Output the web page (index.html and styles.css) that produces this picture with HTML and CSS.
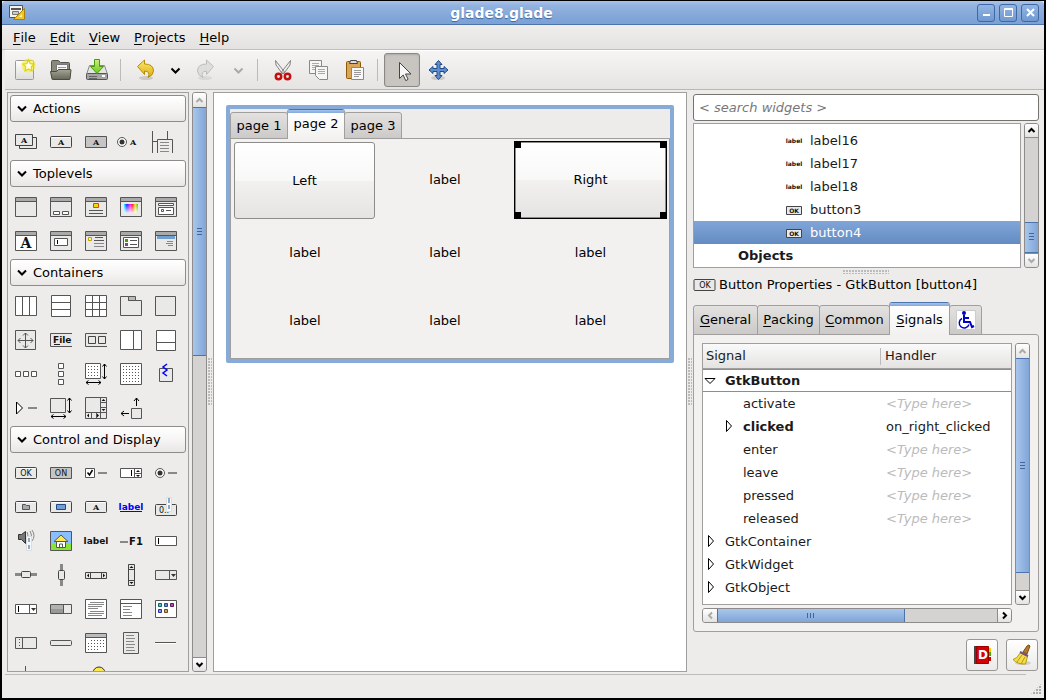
FILE: index.html
```html
<!DOCTYPE html>
<html lang="en">
<head>
<meta charset="utf-8">
<title>glade8.glade</title>
<link rel="stylesheet" href="styles.css">
</head>
<body>
<svg class="defs" aria-hidden="true">
  <linearGradient id="g-doc" x1="0" y1="0" x2="0" y2="1"><stop offset="0" stop-color="#fff"/><stop offset="1" stop-color="#dcdcda"/></linearGradient>
  <linearGradient id="g-folder" x1="0" y1="0" x2="0" y2="1"><stop offset="0" stop-color="#a5a595"/><stop offset="1" stop-color="#66665a"/></linearGradient>
  <linearGradient id="g-gold" x1="0" y1="0" x2="0" y2="1"><stop offset="0" stop-color="#fbe870"/><stop offset="1" stop-color="#dcae0a"/></linearGradient>
  <linearGradient id="g-green" x1="0" y1="0" x2="0" y2="1"><stop offset="0" stop-color="#c8f07a"/><stop offset="1" stop-color="#6cc71c"/></linearGradient>
  <linearGradient id="g-rainbow"><stop offset="0" stop-color="#0ff"/><stop offset=".2" stop-color="#00f"/><stop offset=".45" stop-color="#f0f"/><stop offset=".6" stop-color="#f00"/><stop offset=".8" stop-color="#fd0"/><stop offset="1" stop-color="#0c0"/></linearGradient>
  <linearGradient id="g-fade" x1="0" y1="0" x2="0" y2="1"><stop offset="0" stop-color="#fff" stop-opacity=".1"/><stop offset="1" stop-color="#fff" stop-opacity=".9"/></linearGradient>
  <symbol id="win" viewBox="0 0 24 24"><path class="o" d="M1.5 2.5h21v19h-21z"/><path fill="#aaa" d="M2 3h20v3H2z"/><path class="l" d="M2 6.5h20"/></symbol>
  <symbol id="btn" viewBox="0 0 24 24"><rect class="b" x="1.5" y="6.5" width="21" height="11" rx="1"/><path stroke="#fff" d="M3 7.500h18"/></symbol>
  <symbol id="up" viewBox="0 0 9 9"><path class="c" d="M1.500 6l3-3 3 3"/></symbol>
  <symbol id="down" viewBox="0 0 9 9"><path class="c" d="M1.500 3l3 3 3-3"/></symbol>
  <symbol id="left" viewBox="0 0 9 9"><path class="c" d="M6 1.500l-3 3 3 3"/></symbol>
  <symbol id="right" viewBox="0 0 9 9"><path class="c" d="M3 1.500l3 3-3 3"/></symbol>
  <symbol id="closed" viewBox="0 0 10 14"><path fill="#fff" stroke="#000" d="M2.500 1.500v11l5-5.500z"/></symbol>
</svg>

<div class="window">
  <header class="titlebar">
    <svg class="app-icon" width="18" height="18" viewBox="0 0 18 18"><path fill="#f4f4ef" stroke="#555" d="M1.500 1.500h13v12h-13z"/><path stroke="#555" stroke-width="2" d="M3 5h10"/><path stroke="#777" fill="#ccc" d="M4.500 7.500h6v3h-6z"/><path fill="#eec62b" stroke="#a8820a" d="M16.500 4.500v11h-11z"/><path fill="#fff3b0" d="M14 10v3h-3z"/></svg>
    <h1>glade8.glade</h1>
    <div class="controls">
      <button aria-label="Minimize"><svg width="9" height="9"><path stroke="#fff" stroke-width="2" d="M1 7h7"/></svg></button>
      <button aria-label="Maximize"><svg width="9" height="9"><path fill="none" stroke="#fff" d="M.5.500h8v8h-8zM1 1.500h7"/></svg></button>
      <button aria-label="Close"><svg width="9" height="9"><path stroke="#fff" stroke-width="2" d="M1 1l7 7M8 1L1 8"/></svg></button>
    </div>
  </header>

  <nav class="menubar">
    <button><u>F</u>ile</button><button><u>E</u>dit</button><button><u>V</u>iew</button><button><u>P</u>rojects</button><button><u>H</u>elp</button>
  </nav>

  <div class="toolbar" role="toolbar">
    <button aria-label="New"><svg width="24" height="24"><rect x="2.500" y="2.500" width="18" height="19" rx="1" fill="url(#g-doc)" stroke="#999"/><circle cx="15.500" cy="7.500" r="7" fill="#f3ea1e" opacity=".55"/><path fill="#fff" stroke="#e4d500" stroke-width="1.200" d="M15.500 2l1.700 3.600 3.800.5-2.800 2.700.7 4-3.400-1.900-3.400 1.900.7-4L10 6.100l3.800-.5z"/></svg></button>
    <button aria-label="Open"><svg width="24" height="24"><path fill="#8a8a7c" stroke="#55554b" d="M2.500 18V3.500q0-1 1-1h6l2 2h8q1 0 1 1V18z"/><path fill="#f6f6f6" stroke="#777" d="M7.500 6.500h11v10h-11z"/><path stroke="#999" d="M9 9.500h8M9 11.500h8M9 13.500h5"/><path fill="url(#g-folder)" stroke="#4a4a40" d="M1.500 13.500h6l2-2h12q.5 0 .5.500l-1 9q0 .5-.5.500h-17q-.5 0-.5-.5z"/></svg></button>
    <button aria-label="Save"><svg width="24" height="24"><path fill="#e4e4e2" stroke="#888" d="M4.500 7.500h15l3 9h-21z"/><rect x="1.500" y="15.500" width="21" height="6" rx="1" fill="#a4a5a2" stroke="#555"/><path stroke="#666" d="M4 18.500h8M4 20.500h8"/><path fill="#fff" d="M17 17h3v2h-3z"/><path fill="url(#g-green)" stroke="#4a9a10" d="M9.500 1.500h5v7h4L12 15.500 5.500 8.500h4z"/></svg></button>
    <span class="sep"></span>
    <button aria-label="Undo"><svg width="24" height="24"><ellipse cx="13" cy="20" rx="7" ry="2" fill="#0002"/><path fill="url(#g-gold)" stroke="#b98c08" stroke-linejoin="round" d="M4.500 8.500l7-6.500v4q9 0 9 7 0 4-5.500 6.500 3-6-3.500-6.500v3.500z"/></svg></button>
    <button class="narrow" aria-label="Undo history"><svg width="11" height="9"><path class="c" d="M1.500 2.500l4 4 4-4"/></svg></button>
    <button disabled aria-label="Redo"><svg width="24" height="24"><ellipse cx="11" cy="20" rx="7" ry="2" fill="#0001"/><path fill="#dededc" stroke="#bcbcba" stroke-linejoin="round" d="M19.500 8.500l-7-6.500v4q-9 0-9 7 0 4 5.500 6.500-3-6 3.500-6.500v3.500z"/></svg></button>
    <button class="narrow wide" disabled aria-label="Redo history"><svg width="11" height="9"><path class="c" d="M1.500 2.500l4 4 4-4"/></svg></button>
    <span class="sep"></span>
    <button aria-label="Cut"><svg width="24" height="24"><path fill="#eee" stroke="#777" stroke-width=".9" d="M5.500 2.500L6 7l6.500 9 2-2zM20.500 2.500L20 7l-6.500 9-2-2z"/><g fill="none" stroke="#c41010" stroke-width="2.500"><circle cx="8.500" cy="18.500" r="2.700"/><circle cx="17.500" cy="18.500" r="2.700"/></g></svg></button>
    <button aria-label="Copy"><svg width="24" height="24"><g fill="#f6f6f5" stroke="#888"><path d="M3.500 2.500h12v13h-12z"/><path stroke="#aaa" d="M6 5.500h7M6 7.500h7M6 9.500h7M6 11.500h4"/><path d="M9.500 8.500h12v13h-8l-4-4z"/><path stroke="#aaa" d="M12 11.500h7M12 13.500h7M12 15.500h7"/></g></svg></button>
    <button aria-label="Paste"><svg width="24" height="24"><rect x="4.500" y="3.500" width="14" height="17" rx="1" fill="#d9a65c" stroke="#8f5902"/><path fill="#ddd" stroke="#444" d="M7.500 5.500l1-3h6l1 3z"/><path fill="#f8f8f8" stroke="#888" d="M9.500 9.500h12v12h-12z"/><path stroke="#999" d="M12 12.500h7M12 14.500h7M12 16.500h7M12 18.500h5"/></svg></button>
    <span class="sep"></span>
    <button class="pressed" aria-label="Selector" aria-pressed="true"><svg width="24" height="24"><path fill="#f7f7f7" stroke="#444" d="M9.500 4.500v16l3.700-3.500 2.500 5.500q2 0 2.300-1.500l-2.500-5h5.500z"/></svg></button>
    <button aria-label="Drag resize"><svg width="24" height="24"><ellipse cx="12" cy="20" rx="7" ry="2" fill="#0002"/><path fill="#5c8fd0" stroke="#204a87" stroke-linejoin="round" d="M12.500 2.500l3.500 4h-2v4h4v-2l4 3.500-4 3.500v-2h-4v4h2l-3.500 4-3.500-4h2v-4h-4v2L3 12l4-3.500v2h4v-4H9z"/></svg></button>
  </div>

  <main class="main">
    <section class="palette" aria-label="Palette">
      <h2><button class="head"><svg width="10" height="9"><path class="c" d="M1 2.500l4 4 4-4"/></svg>Actions</button></h2>
      <div class="icons">
        <button aria-label="Action group"><svg width="24" height="24"><path class="b" d="M5.500 7.500h17v11h-17z"/><path class="b" d="M1.500 4.500h17v11h-17z"/><text x="10" y="13" class="serif">A</text></svg></button>
        <button aria-label="Action"><svg width="24" height="24"><use href="#btn"/><text x="12" y="15" class="serif">A</text></svg></button>
        <button aria-label="Toggle action"><svg width="24" height="24"><path fill="#c6c5c4" stroke="#555" d="M1.500 6.500h21v11h-21z"/><text x="12" y="15" class="serif">A</text></svg></button>
        <button aria-label="Radio action"><svg width="24" height="24"><circle class="w" cx="3" cy="12" r="4.500"/><circle cx="3" cy="12" r="2.500" fill="#333"/><text x="14" y="15" class="serif">A</text></svg></button>
        <button aria-label="Recent action"><svg width="24" height="24"><path class="l" d="M-1.500 1v22M13.500 1v8M-1 11.500h4M3.500 23V9.500h15V23"/><path class="g" d="M6 12.500h9M6 15.500h9M6 18.500h9M6 21.500h9"/></svg></button>
      </div>

      <h2><button class="head"><svg width="10" height="9"><path class="c" d="M1 2.500l4 4 4-4"/></svg>Toplevels</button></h2>
      <div class="icons">
        <button aria-label="Window"><svg width="24" height="24"><use href="#win"/></svg></button>
        <button aria-label="Dialog"><svg width="24" height="24"><use href="#win"/><path class="w" d="M4.500 16.500h6v3h-6zM13.500 16.500h6v3h-6z"/></svg></button>
        <button aria-label="Message dialog"><svg width="24" height="24"><use href="#win"/><path fill="#f5d80c" stroke="#d05000" d="M9.500 8.500h5v4h-5z"/><path class="l" d="M5 15.500h14M5 18.500h14"/></svg></button>
        <button aria-label="Color selection dialog"><svg width="24" height="24"><use href="#win"/><path fill="url(#g-rainbow)" d="M5 9h14v9H5z"/><path fill="url(#g-fade)" d="M5 9h14v9H5z"/></svg></button>
        <button aria-label="File chooser dialog"><svg width="24" height="24"><use href="#win"/><path class="w" d="M4.500 8.500h15v2h-15zM4.500 12.500h15v7h-15z"/><path class="l" d="M7.500 14.500h2v2h-2zM12 15.500h5"/></svg></button>
        <button aria-label="Font selection dialog"><svg width="24" height="24"><use href="#win"/><path fill="#fff" d="M2 7h20v14H2z"/><text x="12" y="19" class="serif big">A</text></svg></button>
        <button aria-label="Input dialog"><svg width="24" height="24"><use href="#win"/><path class="w" d="M5.500 9.500h13v7h-13z"/><path stroke="#000" d="M8.500 11v4"/></svg></button>
        <button aria-label="About dialog"><svg width="24" height="24"><use href="#win"/><path fill="#fff3b0" stroke="#c4a000" d="M4.500 8.500h3v3h-3z"/><path class="l" d="M11 8.500h8M10 11.500h10"/><path class="g" d="M10 14.500h10M10 17.500h10"/></svg></button>
        <button aria-label="Assistant"><svg width="24" height="24"><use href="#win"/><path class="w" d="M4.500 8.500h15v10h-15z"/><path class="l" d="M11 11.500h7M11 15.500h7"/><path fill="#4e9a06" d="M6 10h3v3H6z"/><path fill="#75507b" d="M6 14h3v3H6z"/></svg></button>
        <button aria-label="Recent chooser dialog"><svg width="24" height="24"><use href="#win"/><path fill="#729fcf" d="M3 7h18v3H3z"/><path class="g" d="M13 12.500h6M12 14.500h7M14 16.500h5"/></svg></button>
      </div>

      <h2><button class="head"><svg width="10" height="9"><path class="c" d="M1 2.500l4 4 4-4"/></svg>Containers</button></h2>
      <div class="icons">
        <button aria-label="Horizontal box"><svg width="24" height="24"><path class="w" d="M1.500 2.500h21v19h-21zM8.500 3v18M15.500 3v18"/></svg></button>
        <button aria-label="Vertical box"><svg width="24" height="24"><path class="w" d="M2.500 1.500h19v21h-19zM3 8.500h18M3 15.500h18"/></svg></button>
        <button aria-label="Table"><svg width="24" height="24"><path class="w" d="M1.500 1.500h21v21h-21zM2 8.500h20M2 15.500h20M8.500 2v20M15.500 2v20"/></svg></button>
        <button aria-label="Notebook"><svg width="24" height="24"><path class="o" d="M1.500 2.500h8v4h13v15h-21z"/><path fill="#bbb" stroke="#555" d="M9.500 2.500h7v4h-7z"/></svg></button>
        <button aria-label="Frame"><svg width="24" height="24"><path class="o" d="M1.500 2.500h20v19h-20z"/></svg></button>
        <button aria-label="Layout"><svg width="24" height="24"><path class="o" d="M1.500 2.500h20v19h-20zM11.500 5v15M4 12.500h15M9 7.500l2.500-2.500 2.500 2.500M9 17.500l2.500 2.500 2.500-2.500M6.500 10L4 12.500 6.500 15M16.500 10l2.500 2.500-2.500 2.500"/></svg></button>
        <button aria-label="Menu bar"><svg width="24" height="24"><path class="o" d="M23 5.500H1.500v13H23"/><text x="4" y="15" class="file">File</text><path stroke="#222" d="M5 16.500h6"/></svg></button>
        <button aria-label="Toolbar"><svg width="24" height="24"><path class="o" d="M23 5.500H1.500v13H23"/><path class="b" d="M4.500 8.500h7v7h-7zM14.500 8.500h7v7h-7z"/></svg></button>
        <button aria-label="Horizontal panes"><svg width="24" height="24"><path class="w" d="M1.500 2.500h21v19h-21zM14.500 3v18"/></svg></button>
        <button aria-label="Vertical panes"><svg width="24" height="24"><path class="w" d="M2.500 2.500h19v20h-19zM3 14.500h18"/></svg></button>
        <button aria-label="Horizontal button box"><svg width="24" height="24"><path class="w" d="M1.500 9.500h5v5h-5zM9.500 9.500h5v5h-5zM17.500 9.500h5v5h-5z"/></svg></button>
        <button aria-label="Vertical button box"><svg width="24" height="24"><path class="w" d="M9.500 1.500h5v5h-5zM9.500 9.500h5v5h-5zM9.500 17.500h5v5h-5z"/></svg></button>
        <button aria-label="Scrolled layout"><svg width="24" height="24"><path class="w" d="M1.500 1.500h15v15h-15z"/><path class="d" d="M4 4.500h11M4 7.500h11M4 10.500h11M4 13.500h11"/><path class="k" d="M20.500 2v15M18.500 4.500l2-2.500 2 2.500M18.500 14.500l2 2.500 2-2.500M2 20.500h15M4.500 18.500L2 20.500l2.500 2M14.500 18.500l2.500 2-2.500 2"/></svg></button>
        <button aria-label="Fixed"><svg width="24" height="24"><path class="w" d="M1.500 1.500h21v21h-21z"/><path class="d" d="M4 4.500h17M4 7.500h17M4 10.500h17M4 13.500h17M4 16.500h17M4 19.500h17"/></svg></button>
        <button aria-label="Event box"><svg width="24" height="24"><path class="o" d="M5.500 6.500h13v13h-13z"/><path fill="none" stroke="#00f" stroke-width="1.500" d="M13 2l-4 3 4 3-4 3 4 3"/></svg></button>
        <button aria-label="Expander"><svg width="24" height="24"><path fill="#fff" stroke="#000" d="M2.500 6v12l6-6z"/><path class="t" d="M14 12h9"/></svg></button>
        <button aria-label="Viewport"><svg width="24" height="24"><path class="o" d="M1.500 2.500h15v14h-15z"/><path class="k" d="M20.500 2v15M18.500 4.500l2-2.500 2 2.500M18.500 14.500l2 2.500 2-2.500M2 20.500h15M4.500 18.500L2 20.500l2.500 2M14.500 18.500l2.500 2-2.500 2"/></svg></button>
        <button aria-label="Scrolled window"><svg width="24" height="24"><path class="o" d="M1.500 1.500h21v21h-21zM2 16.500h20M16.500 2v20M7.500 17v5M12.500 17v5M17 6.500h5M17 11.500h5"/><path d="M19.500 3l2 2h-4zM19.500 15l2-2h-4zM3 19.500l2-2v4zM15 19.500l-2-2v4z"/></svg></button>
        <button aria-label="Alignment"><svg width="24" height="24"><path class="o" d="M12.500 12.500h10v10h-10z"/><path class="k" d="M17.500 2v8M15 5l2.500-3L20 5M2 17.500h8M5 15l-3 2.500L5 20"/></svg></button>
      </div>

      <h2><button class="head"><svg width="10" height="9"><path class="c" d="M1 2.500l4 4 4-4"/></svg>Control and Display</button></h2>
      <div class="icons">
        <button aria-label="Button"><svg width="24" height="24"><use href="#btn"/><text x="12" y="15" class="tiny">OK</text></svg></button>
        <button aria-label="Toggle button"><svg width="24" height="24"><path fill="#c6c5c4" stroke="#555" d="M1.500 6.500h21v11h-21z"/><text x="12" y="15" class="tiny">ON</text></svg></button>
        <button aria-label="Check button"><svg width="24" height="24"><path class="w" d="M1.500 7.500h9v9h-9z"/><path fill="none" stroke="#000" stroke-width="1.500" d="M3.500 11.500l2 2.500 3-5"/><path class="t" d="M14 12h9"/></svg></button>
        <button aria-label="Spin button"><svg width="24" height="24"><path class="w" d="M1.500 7.500h21v9h-21zM15.500 8v8M16 12.500h6"/><path stroke="#000" d="M12.500 9v6"/><path d="M19 9l2 2h-4zM19 16l2-2h-4z"/></svg></button>
        <button aria-label="Radio button"><svg width="24" height="24"><circle class="w" cx="6" cy="12" r="4.500"/><circle cx="6" cy="12" r="2.500" fill="#333"/><path class="t" d="M14 12h9"/></svg></button>
        <button aria-label="File chooser button"><svg width="24" height="24"><use href="#btn"/><path fill="#aaa" stroke="#555" d="M8.500 9.500h3l1 1h3v4h-7z"/></svg></button>
        <button aria-label="Color button"><svg width="24" height="24"><use href="#btn"/><path fill="#729fcf" stroke="#204a87" d="M7.500 9.500h9v5h-9z"/></svg></button>
        <button aria-label="Font button"><svg width="24" height="24"><use href="#btn"/><text x="12" y="15" class="serif">A</text></svg></button>
        <button aria-label="Link button"><svg width="24" height="24"><text x="12" y="15" class="lbl link">label</text><path stroke="#00f" d="M1 16.500h22"/></svg></button>
        <button aria-label="Scale button"><svg width="24" height="24"><rect class="b" x="1.500" y="9.500" width="21" height="11" rx="1"/><text x="10" y="18" class="tiny">0..</text><path fill="#f8f8f8" stroke="#ddd" d="M12.500 2.500h5v14h-5z"/><path stroke="#88a8cc" stroke-width="2" d="M15 3v5M15 10v4"/></svg></button>
        <button aria-label="Volume button"><svg width="24" height="24"><path fill="#777" stroke="#333" d="M4.500 5.500h3l4-3v12l-4-4h-3z"/><path fill="none" stroke="#888" d="M13 3q2 3 0 6M16 2q3 4 0 8M18 1q4 6 0 11"/><path fill="#f8f8f8" stroke="#ddd" d="M12.500 7.500h5v14h-5z"/><path stroke="#88a8cc" stroke-width="2" d="M15 9v4M15 16v4"/></svg></button>
        <button aria-label="Image"><svg width="24" height="24"><path fill="#8abfff" stroke="#555" d="M1.500 2.500h21v19h-21z"/><path fill="#8ae234" d="M2 15h20v6H2z"/><path fill="#fff" stroke="#555" d="M7.500 11.500h9v7h-9zM10.500 19v-4h3v4"/><path fill="#fce94f" stroke="#555" d="M5 12.500l7-6.500 7 6.500z"/></svg></button>
        <button aria-label="Label"><svg width="24" height="24"><text x="12" y="15" class="lbl">label</text></svg></button>
        <button aria-label="Accelerator label"><svg width="24" height="24"><path class="t" d="M1 13h8"/><text x="17" y="16" class="lbl f1">F1</text></svg></button>
        <button aria-label="Text entry"><svg width="24" height="24"><path class="w" d="M1.500 7.500h21v9h-21z"/><path stroke="#000" d="M4.500 9v6"/></svg></button>
        <button aria-label="Horizontal scale"><svg width="24" height="24"><path stroke="#888" stroke-width="3" d="M1 11.500h22"/><rect class="b" x="7.500" y="8.500" width="9" height="6" rx="1"/></svg></button>
        <button aria-label="Vertical scale"><svg width="24" height="24"><path stroke="#888" stroke-width="3" d="M12.500 1v22"/><rect class="b" x="9.500" y="7.500" width="6" height="9" rx="1"/></svg></button>
        <button aria-label="Horizontal scrollbar"><svg width="24" height="24"><path class="b" d="M1.500 9.500h21v6h-21zM6.500 10v5M17.500 10v5"/><path d="M3 12.500l2-2v4zM21 12.500l-2-2v4z"/></svg></button>
        <button aria-label="Vertical scrollbar"><svg width="24" height="24"><path class="b" d="M9.500 1.500h6v21h-6zM10 6.500h5M10 17.500h5"/><path d="M12.500 3l2 2h-4zM12.500 21l2-2h-4z"/></svg></button>
        <button aria-label="Combo box"><svg width="24" height="24"><path class="o" d="M1.500 7.500h21v9h-21zM15.500 8v8"/><path d="M17 11h5l-2.500 3z" fill="#333"/></svg></button>
        <button aria-label="Combo box entry"><svg width="24" height="24"><path class="w" d="M1.500 7.500h21v9h-21zM15.500 8v8"/><path stroke="#000" d="M4.500 9v6"/><path d="M17 11h5l-2.500 3z" fill="#333"/></svg></button>
        <button aria-label="Progress bar"><svg width="24" height="24"><path class="o" d="M1.500 7.500h21v9h-21z"/><path fill="#b2b2b0" d="M2 8h12v4H2z"/><path fill="#999" d="M2 12h12v4H2z"/><path class="l" d="M14.500 8v8"/></svg></button>
        <button aria-label="Text view"><svg width="24" height="24"><path class="w" d="M1.500 2.500h21v19h-21z"/><path class="g" d="M6 5.500h14M4 7.500h16M4 9.500h14M4 11.500h10M6 14.500h14M4 16.500h16M4 18.500h14"/></svg></button>
        <button aria-label="Tree view"><svg width="24" height="24"><path class="w" d="M1.500 2.500h21v19h-21zM2 6.500h20"/><path class="g" d="M4 9.500h9M4 12.500h7M4 15.500h9M4 18.500h9"/></svg></button>
        <button aria-label="Icon view"><svg width="24" height="24"><path class="w" d="M1.500 3.500h21v17h-21z"/><path fill="#4fc4c4" stroke="#116262" d="M4.500 6.500h3v3h-3z"/><path fill="#6688cc" stroke="#204a87" d="M10.500 6.500h3v3h-3z"/><path fill="#ad4fad" stroke="#5c155c" d="M16.500 6.500h3v3h-3z"/><path fill="#8a9aea" stroke="#2030a0" d="M4.500 12.500h3v3h-3z"/><path fill="#c9a66b" stroke="#6d4c12" d="M10.500 12.500h3v3h-3z"/></svg></button>
        <button aria-label="Handle box"><svg width="24" height="24"><path class="o" d="M1.500 6.500h21v11h-21zM8.500 7v10"/><path class="d" d="M5.500 8v8"/></svg></button>
        <button aria-label="Status bar"><svg width="24" height="24"><rect class="o" x="1.500" y="9.500" width="21" height="5" rx="1"/></svg></button>
        <button aria-label="Calendar"><svg width="24" height="24"><path class="w" d="M1.500 2.500h21v19h-21z"/><path fill="#bbb" d="M2 3h20v3H2z"/><path class="l" d="M2 6.500h20"/><path class="d" d="M7 9.500h14M4 12.500h17M4 15.500h17M4 18.500h11"/></svg></button>
        <button aria-label="Popup menu"><svg width="24" height="24"><path class="o" d="M4.500 1.500h15v21h-15z"/><path class="g" d="M7 4.500h8M7 7.500h9M7 10.500h8M7 13.500h9M7 16.500h8M7 19.500h9"/></svg></button>
        <button aria-label="Horizontal separator"><svg width="24" height="24"><path class="l" d="M1 11.500h21"/><path stroke="#fff" d="M1 12.500h21"/></svg></button>
        <button aria-label="Vertical separator"><svg width="24" height="24"><path class="l" d="M11.500 1v21"/></svg></button>
        <button aria-label="Arrow"><svg width="24" height="24"></svg></button>
        <button aria-label="Drawing area"><svg width="24" height="24"><circle cx="15" cy="8" r="6" fill="#fce94f" stroke="#333"/></svg></button>
      </div>
    </section>
    <div class="scroll vert palette-scroll"><button disabled aria-label="Scroll up"><svg width="9" height="9"><use href="#up"/></svg></button><span class="thumb"></span><span class="rest"></span><button aria-label="Scroll down"><svg width="9" height="9"><use href="#down"/></svg></button></div>
    <div class="grip"></div>

    <section class="canvas" aria-label="Design canvas">
      <div class="design">
        <div class="tabs"><button>page 1</button><button class="active">page 2</button><button>page 3</button></div>
        <div class="sheet">
          <button class="cell-btn">Left</button><span>label</span>
          <div class="selected"><button class="cell-btn">Right</button><i class="h nw"></i><i class="h ne"></i><i class="h sw"></i><i class="h se"></i></div>
          <span>label</span><span>label</span><span>label</span>
          <span>label</span><span>label</span><span>label</span>
        </div>
      </div>
    </section>
    <div class="grip"></div>

    <aside class="side">
      <input class="search" type="text" aria-label="Search widgets" placeholder="&lt; search widgets &gt;">
      <div class="split">
        <ul class="tree">
          <li><svg width="18" height="12" class="name-ico"><text x="9" y="8" class="mini">label</text></svg>label16</li>
          <li><svg width="18" height="12" class="name-ico"><text x="9" y="8" class="mini">label</text></svg>label17</li>
          <li><svg width="18" height="12" class="name-ico"><text x="9" y="8" class="mini">label</text></svg>label18</li>
          <li><svg width="18" height="12" class="name-ico"><path class="b" d="M1.500 2.500h15v8h-15z"/><text x="9" y="9" class="mini">OK</text></svg>button3</li>
          <li class="on"><svg width="18" height="12" class="name-ico"><path class="b" d="M1.500 2.500h15v8h-15z"/><text x="9" y="9" class="mini">OK</text></svg>button4</li>
          <li class="root">Objects</li>
        </ul>
        <div class="scroll vert tree-scroll"><button aria-label="Scroll up"><svg width="9" height="9"><use href="#up"/></svg></button><span class="rest"></span><span class="thumb"></span><button disabled aria-label="Scroll down"><svg width="9" height="9"><use href="#down"/></svg></button></div>
      </div>
      <div class="hgrip"></div>
      <h2 class="prop-title"><svg width="24" height="14"><rect class="b" x="1" y="1.500" width="21" height="11" rx="1"/><text x="12" y="10" class="tiny">OK</text></svg>Button Properties - GtkButton [button4]</h2>
      <div class="tabs props">
        <button><u>G</u>eneral</button><button><u>P</u>acking</button><button><u>C</u>ommon</button><button class="active"><u>S</u>ignals</button><button aria-label="Accessibility"><svg width="20" height="20"><path fill="#fff" stroke="#ccc" d="M.5.500h19v19H.5z"/><circle cx="8" cy="3" r="2" fill="#00c"/><path fill="none" stroke="#00c" stroke-width="2" d="M8 5v7h6l2 5 2-1M8 8h5"/><path fill="none" stroke="#00c" stroke-width="1.500" d="M6 8.500a5 5 0 1 0 7 6"/></svg></button>
      </div>
      <div class="props-body">
        <div class="signals">
          <table>
            <thead><tr><th>Signal</th><th>Handler</th></tr></thead>
            <tbody>
              <tr class="cur"><td><svg class="tri" width="14" height="14"><path fill="#fff" stroke="#000" d="M2 4.500h10l-5 5z"/></svg><b>GtkButton</b></td><td></td></tr>
              <tr class="sub"><td>activate</td><td class="hint">&lt;Type here&gt;</td></tr>
              <tr class="sub open"><td><svg class="tri" width="10" height="14"><use href="#closed"/></svg><b>clicked</b></td><td>on_right_clicked</td></tr>
              <tr class="sub"><td>enter</td><td class="hint">&lt;Type here&gt;</td></tr>
              <tr class="sub"><td>leave</td><td class="hint">&lt;Type here&gt;</td></tr>
              <tr class="sub"><td>pressed</td><td class="hint">&lt;Type here&gt;</td></tr>
              <tr class="sub"><td>released</td><td class="hint">&lt;Type here&gt;</td></tr>
              <tr><td><svg class="tri" width="10" height="14"><use href="#closed"/></svg>GtkContainer</td><td></td></tr>
              <tr><td><svg class="tri" width="10" height="14"><use href="#closed"/></svg>GtkWidget</td><td></td></tr>
              <tr><td><svg class="tri" width="10" height="14"><use href="#closed"/></svg>GtkObject</td><td></td></tr>
            </tbody>
          </table>
        </div>
        <div class="scroll vert sig-scroll"><button disabled aria-label="Scroll up"><svg width="9" height="9"><use href="#up"/></svg></button><span class="thumb"></span><span class="rest"></span><button aria-label="Scroll down"><svg width="9" height="9"><use href="#down"/></svg></button></div>
        <div class="scroll horiz"><button disabled aria-label="Scroll left"><svg width="9" height="9"><use href="#left"/></svg></button><span class="thumb"></span><span class="rest"></span><button aria-label="Scroll right"><svg width="9" height="9"><use href="#right"/></svg></button></div>
      </div>
      <div class="actions">
        <button aria-label="Documentation"><svg width="22" height="22"><path fill="#444" d="M3 2h4v18H3z"/><path fill="#d80000" stroke="#900" d="M5.500 2.500h12v17h-12z"/><path fill="#fc0" d="M18 4h2v4h-2z"/><path fill="#4a0" d="M18 8h2v4h-2z"/><path fill="#c00" d="M18 13h2v4h-2z"/><text x="12" y="15" class="dev">D</text></svg></button>
        <button aria-label="Clear"><svg width="22" height="22"><ellipse cx="12" cy="19" rx="8" ry="2" fill="#0002"/><path fill="#b5782c" stroke="#7a4b12" d="M12 8l4-6q2-2 3 0l-3 8z"/><path fill="#f4dd4a" stroke="#b79a10" d="M9.500 8.500l7 4-2 7.500q-8 .5-12.500-4.500 4-.5 7.500-7z"/><path stroke="#b79a10" d="M11 11l-5 7M14 13l-4 7"/><path stroke="#75507b" stroke-width="2" d="M9 8l8 4"/></svg></button>
      </div>
    </aside>
  </main>
  <footer class="status"><span class="corner"></span></footer>
</div>
</body>
</html>
```
FILE: styles.css
```css
* { box-sizing: border-box; }
html, body { height: 100%; }
body { margin: 0; background: #000; color: #000; font: 13px/16px "DejaVu Sans", sans-serif; overflow: hidden; }
button { font: inherit; color: inherit; border: 0; background: none; padding: 0; margin: 0; display: flex; align-items: center; justify-content: center; }
h1, h2, ul { margin: 0; padding: 0; font: inherit; list-style: none; }
svg { display: block; flex: none; }
u { text-underline-offset: 2px; }
.defs { position: absolute; width: 0; height: 0; }
.window { height: 100vh; border: 2px solid #000; border-top-width: 1px; background: #edeceb; display: flex; flex-direction: column; }

.titlebar { height: 24px; flex: none; display: flex; align-items: center; padding: 0 5px 0 6px; background: linear-gradient(#a8c4ea, #93b2df 20%, #7da2d6 90%); border-bottom: 1px solid #4d73ad; border-radius: 4px 4px 0 0; }
.titlebar h1 { flex: 1; text-align: center; color: #fff; font-size: 14px; font-weight: bold; text-shadow: 0 1px 1px #3c64a0; }
.controls { display: flex; gap: 4px; }
.controls button { width: 18px; height: 18px; border: 1px solid #4167a5; border-radius: 3px; background: linear-gradient(#92b5e4, #6f99d0); }

.menubar { height: 25px; flex: none; display: flex; gap: 14px; padding: 1px 11px 0; background: linear-gradient(#efeeed, #e3e2e0); border-bottom: 1px solid #c0bfbd; }
.toolbar { height: 40px; flex: none; display: flex; align-items: center; margin-left: 3px; padding-left: 2px; background: linear-gradient(#f6f5f4, #e5e4e2); border-top: 1px solid #fff; border-bottom: 1px solid #b9b8b6; }
.toolbar button { width: 36px; height: 34px; }
.toolbar .narrow { width: 25px; }
.toolbar .wide { width: 28px; }
.toolbar .sep { width: 12px; height: 22px; padding-left: 5px; }
.toolbar .sep::before { content: ""; display: block; height: 22px; border-left: 1px solid #bbb; }
.toolbar .pressed { border: 1px solid #8b8986; border-radius: 3px; background: #c8c5c1; box-shadow: inset 0 1px 2px #aaa; }

.main { flex: 1; min-height: 0; display: flex; padding: 2px 5px 2px; }
.palette { width: 182px; flex: none; border: 1px solid #a09f9d; overflow: hidden; padding-top: 2px; }
.head { width: 176px; height: 27px; margin: 0 2px; padding-left: 6px; gap: 6px; justify-content: flex-start; border: 1px solid #8e8c8a; border-radius: 3px; background: linear-gradient(#fff, #f6f5f4 50%, #e8e7e6); }
.icons { display: grid; grid-template-columns: repeat(5, 35px); grid-auto-rows: 34px; padding: 3px 0 1px; }
.icons button { padding: 0 5px 0 6px; }

.icons svg, .name-ico, .prop-title svg { fill: #111; overflow: visible; }
.o { fill: #e9e9e8; stroke: #555; }
.w { fill: #fff; stroke: #555; }
.b { fill: #e9e9e8; stroke: #444; }
.l { fill: none; stroke: #555; }
.g { fill: none; stroke: #888; }
.t { fill: none; stroke: #888; stroke-width: 2; }
.k { fill: none; stroke: #000; }
.d { fill: none; stroke: #555; stroke-dasharray: 1 2; }
.c { fill: none; stroke: currentColor; stroke-width: 2; }
button:disabled { color: #aaa; }
.serif { font: bold 8px "DejaVu Serif", serif; text-anchor: middle; }
.serif.big { font-size: 14px; }
.tiny { font-size: 8px; text-anchor: middle; }
.mini { font-size: 6px; font-weight: bold; text-anchor: middle; }
.file { font-size: 9px; font-weight: bold; }
.lbl { font-size: 9px; font-weight: bold; text-anchor: middle; }
.link { fill: #00f; }
.f1 { font-size: 10px; }
.dev { font-size: 12px; font-weight: bold; fill: #fff; text-anchor: middle; }

.scroll { display: flex; background: #d4d3d2; border: 1px solid #8e8c8a; border-radius: 3px; overflow: hidden; }
.scroll.vert { flex-direction: column; width: 15px; flex: none; }
.scroll button { flex: none; background: linear-gradient(#fff, #e4e3e2); }
.vert button { height: 14px; }
.horiz button { width: 14px; }
.thumb { display: block; }
.vert .thumb { margin: 0 -1px; border: 1px solid #4b74ad; background: linear-gradient(90deg, #a9c6ec, #80a5d8); position: relative; }
.horiz .thumb { margin: -1px 0; border: 1px solid #4b74ad; background: linear-gradient(#a9c6ec, #80a5d8); position: relative; }
.vert .thumb::after { content: ""; position: absolute; left: 4px; top: calc(50% - 4px); width: 5px; height: 7px; background: repeating-linear-gradient(#3f659e 0 1px, transparent 1px 3px); }
.horiz .thumb::after { content: ""; position: absolute; top: 4px; left: calc(50% - 4px); width: 7px; height: 5px; background: repeating-linear-gradient(90deg, #3f659e 0 1px, transparent 1px 3px); }
.vert button:last-child { border-top: 1px solid #8e8c8a; }
.tree-scroll button:first-child { border-bottom: 1px solid #8e8c8a; }
.horiz button:last-child { border-left: 1px solid #8e8c8a; }
.palette-scroll { margin-left: 3px; }
.palette-scroll .thumb { flex: 248; }
.palette-scroll .rest { flex: 302; }
.tree-scroll .rest { flex: 86; }
.tree-scroll .thumb { flex: 30; }
.sig-scroll .thumb { flex: 216; }
.sig-scroll .rest { flex: 17; }
.horiz .thumb { flex: 188; }
.horiz .rest { flex: 93; }
.grip { width: 6px; flex: none; display: flex; align-items: center; justify-content: center; }
.grip::before { content: ""; width: 4px; height: 48px; background: radial-gradient(circle at 1px 1px, #bbb 1px, transparent 1px) 0 0 / 3px 3px; }
.hgrip { height: 7px; flex: none; display: flex; align-items: center; justify-content: center; }
.hgrip::before { content: ""; width: 46px; height: 4px; background: radial-gradient(circle at 1px 1px, #bbb 1px, transparent 1px) 0 0 / 3px 3px; }

.canvas { flex: 1; min-width: 0; background: #fff; border: 1px solid #a09f9d; padding: 12px; }
.design { border: 4px solid #86abd9; border-radius: 2px; background: #edeceb; }
.tabs { display: flex; align-items: flex-end; height: 30px; position: relative; margin-bottom: -1px; }
.tabs button { height: 27px; width: 58px; margin-right: -1px; border: 1px solid #a09f9d; border-radius: 3px 3px 0 0; background: linear-gradient(#e3e2e1, #cbcac8); }
.tabs .active { height: 30px; padding-bottom: 1px; border-bottom: 0; border-top: 0; background: linear-gradient(#4b74ad 0 1px, #a3c1ea 1px, #85a9dc 4px, #fff 4px, #f2f1f0); position: relative; }
.sheet { display: grid; grid-template-columns: 142fr 138fr 153fr; grid-template-rows: 78px 68px 68px; place-items: center; padding: 2px 2px 3px 3px; background: #f2f1f0; border: 1px solid #a09f9d; }
.cell-btn { width: 100%; height: 100%; border: 1px solid #8e8c8a; border-radius: 3px; background: linear-gradient(#fff, #f8f8f7 50%, #f2f1f0 50%, #e5e4e3); }
.sheet > .cell-btn { width: calc(100% - 1px); height: 77px; justify-self: start; align-self: end; }
.selected { width: 100%; height: 78px; border: 1px solid #000; position: relative; }
.selected .cell-btn { border-radius: 0; }
.h { position: absolute; width: 7px; height: 7px; background: #000; }
.nw { left: -1px; top: -1px; }
.ne { right: -1px; top: -1px; }
.sw { left: -1px; bottom: -1px; }
.se { right: -1px; bottom: -1px; }

.side { width: 346px; flex: none; display: flex; flex-direction: column; padding-top: 2px; }
.search { height: 27px; flex: none; border: 1px solid #76736f; border-radius: 3px; padding: 0 5px; background: #fff; font: inherit; }
.search::placeholder { color: #777; font-style: italic; opacity: 1; }
.split { display: flex; gap: 3px; margin-top: 2px; flex: none; }
.tree { flex: 1; background: #fff; border: 1px solid #a09f9d; padding-top: 5px; color: #1a1a1a; }
.tree li { height: 23px; display: flex; align-items: center; gap: 7px; padding-left: 91px; }
.tree .root { font-weight: bold; padding-left: 44px; }
.tree .on { background: linear-gradient(#81a5d9, #638cc2); color: #fff; }
.prop-title { height: 20px; flex: none; display: flex; align-items: center; gap: 2px; }
.props { height: 33px; margin-top: 7px; flex: none; }
.props button { height: 30px; width: 65px; }
.props button:nth-child(2) { width: 63px; }
.props button:nth-child(3) { width: 71px; }
.props .active { height: 33px; width: 61px; padding: 2px 0 0; }
.props button:last-child { width: 33px; }
.props-body { flex: 1; min-height: 0; display: grid; grid-template-columns: 1fr 15px; grid-template-rows: 1fr 15px; gap: 3px; padding: 8px; border: 1px solid #a09f9d; border-radius: 0 3px 3px 3px; background: #f2f1f0; }
.signals { background: #fff; border: 1px solid #a09f9d; overflow: hidden; min-height: 0; color: #1a1a1a; }
table { width: 100%; border-collapse: separate; border-spacing: 0; table-layout: fixed; }
th { height: 25px; padding: 0 4px; font-weight: normal; text-align: left; background: linear-gradient(#fafafa, #e4e3e2); border-bottom: 1px solid #a09f9d; }
th:first-child { width: 178px; padding-left: 3px; background: linear-gradient(#bbb, #bbb) right center / 1px 17px no-repeat, linear-gradient(#fafafa, #e4e3e2); }
td { height: 23px; padding: 0 5px; white-space: nowrap; }
td:first-child { padding-left: 22px; position: relative; }
.cur td { border-top: 1px solid #7293bd; border-bottom: 1px solid #7293bd; }
.sub td:first-child { padding-left: 40px; }
.tri { position: absolute; left: 3px; top: 4px; }
.cur .tri { left: 0; }
.open .tri { left: 21px; }
.hint { color: #bbb; font-style: italic; }
.actions { flex: none; display: flex; justify-content: flex-end; gap: 8px; padding: 7px 1px 1px 0; }
.actions button { width: 32px; height: 32px; border: 1px solid #9a9896; border-radius: 3px; background: linear-gradient(#fff, #ebeae9); }
.status { height: 24px; flex: none; margin: 0 2px 0 3px; display: flex; align-items: flex-end; justify-content: flex-end; background: linear-gradient(#bbb, #bbb) 0 0 / calc(100% - 16px) 1px no-repeat; }
.corner { width: 12px; height: 12px; margin-bottom: 3px; background: radial-gradient(circle at 1px 1px, #aaa 1px, transparent 1px) 0 0 / 3px 3px; clip-path: polygon(100% 0, 100% 100%, 0 100%); }
```
